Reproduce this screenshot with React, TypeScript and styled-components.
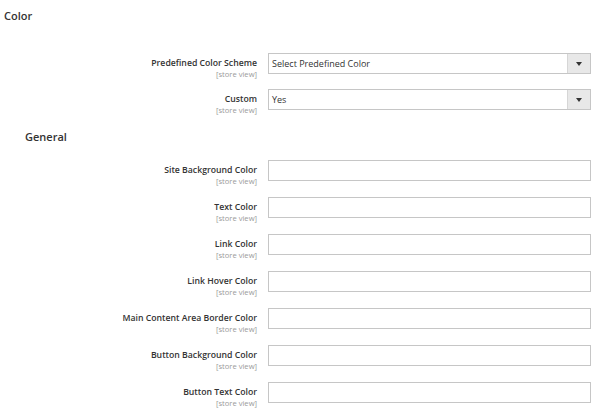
import React from "react";
import styled, { createGlobalStyle } from "styled-components";

const GlobalStyle = createGlobalStyle`
  body {
    margin: 0;
    background: #ffffff;
    font-family: "Open Sans", "Liberation Sans", sans-serif;
    color: #303030;
  }
`;

const SCHEME_FIELDS = [
  { id: "scheme", label: "Predefined Color Scheme", value: "Select Predefined Color" },
  { id: "custom", label: "Custom", value: "Yes" },
];

const GENERAL_FIELDS = [
  "Site Background Color",
  "Text Color",
  "Link Color",
  "Link Hover Color",
  "Main Content Area Border Color",
  "Button Background Color",
  "Button Text Color",
];

export default function App() {
  return (
    <Page>
      <GlobalStyle />
      <SectionTitle>Color</SectionTitle>
      <Fieldset $top={30} $gap={15}>
        {SCHEME_FIELDS.map((f) => (
          <Row key={f.id}>
            <Label>
              <span className="title">{f.label}</span>
              <span className="scope">[store view]</span>
            </Label>
            <Select>
              <span>{f.value}</span>
              <div className="arrow">
                <svg width="6" height="4" viewBox="0 0 6 4">
                  <path d="M0 0 H6 L3 4 Z" fill="#333" />
                </svg>
              </div>
            </Select>
          </Row>
        ))}
      </Fieldset>
      <GroupTitle>General</GroupTitle>
      <Fieldset $top={16} $gap={16}>
        {GENERAL_FIELDS.map((label) => (
          <Row key={label}>
            <Label>
              <span className="title">{label}</span>
              <span className="scope">[store view]</span>
            </Label>
            <TextInput />
          </Row>
        ))}
      </Fieldset>
    </Page>
  );
}

const Page = styled.div`
  width: 600px;
  height: 412px;
  overflow: hidden;
  padding: 9px 9px 0 0;
  box-sizing: border-box;
`;

const SectionTitle = styled.h2`
  margin: 0 0 0 4px;
  font-size: 11px;
  font-weight: 600;
  line-height: 14px;
  color: #333;
`;

const GroupTitle = styled.h3`
  margin: 20px 0 0 25px;
  font-size: 11px;
  font-weight: 600;
  line-height: 14px;
  color: #333;
`;

const Fieldset = styled.div<{ $top: number; $gap: number }>`
  display: flex;
  flex-direction: column;
  row-gap: ${(p) => p.$gap}px;
  margin-top: ${(p) => p.$top}px;
`;

const Row = styled.div`
  display: grid;
  grid-template-columns: 257px 1fr;
  column-gap: 11px;
  align-items: start;
  height: 21px;
`;

const Label = styled.div`
  display: flex;
  flex-direction: column;
  align-items: flex-end;
  padding-top: 5px;

  .title {
    font-size: 8.7px;
    font-weight: 600;
    line-height: 11px;
    color: #333;
  }

  .scope {
    font-size: 7.6px;
    line-height: 10px;
    color: #9a9a9a;
  }
`;

const Select = styled.div`
  display: flex;
  align-items: stretch;
  height: 21px;
  box-sizing: border-box;
  border: 1px solid #c6c6c6;
  background: #fff;

  span {
    flex: 1;
    display: flex;
    align-items: center;
    padding-left: 3px;
    font-size: 9px;
    color: #333;
  }

  .arrow {
    width: 22px;
    display: flex;
    align-items: center;
    justify-content: center;
    background: #e8e8e8;
    border-left: 1px solid #d6d6d6;
  }
`;

const TextInput = styled.div`
  height: 21px;
  box-sizing: border-box;
  border: 1px solid #c6c6c6;
  background: #fff;
`;
